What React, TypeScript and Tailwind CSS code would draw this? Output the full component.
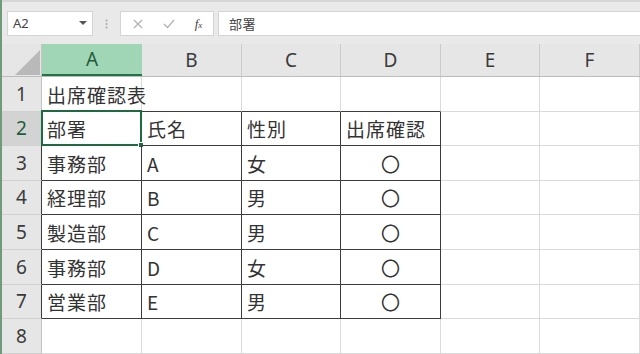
import React from "react";

const font = "font-['Noto_Sans_CJK_JP','Noto_Sans',sans-serif]";

const cols = ["A", "B", "C", "D", "E", "F"];
const rowHeights = ["h-[35px]", "h-[34px]", "h-[35px]", "h-[34px]", "h-[35px]", "h-[35px]", "h-[34px]", "h-[35px]"];

// row index 0..7 => excel row 1..8
const data: string[][] = [
  ["出席確認表", "", "", "", "", ""],
  ["部署", "氏名", "性別", "出席確認", "", ""],
  ["事務部", "A", "女", "〇", "", ""],
  ["経理部", "B", "男", "〇", "", ""],
  ["製造部", "C", "男", "〇", "", ""],
  ["事務部", "D", "女", "〇", "", ""],
  ["営業部", "E", "男", "〇", "", ""],
  ["", "", "", "", "", ""],
];

function Cell({ r, c, text }: { r: number; c: number; text: string }) {
  const inTable = r >= 1 && r <= 6 && c <= 3;
  const aboveTable = r === 0 && c <= 3;
  const right = inTable ? "border-r-[#3c3c3c]" : "border-r-[#dadada]";
  const bottom = inTable || aboveTable ? "border-b-[#3c3c3c]" : "border-b-[#dadada]";
  const center = c === 3 && r >= 2 && r <= 6;
  const selected = r === 1 && c === 0;
  return (
    <div
      className={`relative flex items-center border-r border-b ${right} ${bottom} ${
        center ? "justify-center" : "pl-[5px] tracking-[1px]"
      } text-[19px] leading-none text-[#333] whitespace-nowrap`}
    >
      {text}
      {selected && (
        <div className="absolute -top-[2px] -left-[1px] -right-[1px] -bottom-[1px] border-2 border-[#1e6b41]">
          <div className="absolute -right-[4px] -bottom-[4px] w-[6px] h-[6px] bg-[#1e6b41] border border-white" />
        </div>
      )}
    </div>
  );
}

export default function App() {
  return (
    <div className={`w-[640px] h-[354px] overflow-hidden bg-white border-l-2 border-[#6f9a7c] ${font}`}>
      {/* FORMULA BAR */}
      <div className="h-[44px] bg-[#e9e9e9] border-t-2 border-[#d6d6d6] pt-[9px] flex items-start">
        <div className="ml-[5px] w-[86px] h-[25px] bg-white border border-[#d4d4d4] flex items-center justify-between pl-[5px] pr-[5px]">
          <span className="text-[13px] text-[#444] font-['Noto_Sans',sans-serif]">A2</span>
          <svg width="8" height="5" viewBox="0 0 8 5">
            <path d="M0 0 L8 0 L4 4 Z" fill="#555" />
          </svg>
        </div>
        <div className="w-[27px] h-[25px] flex items-center justify-center">
          <svg width="3" height="10" viewBox="0 0 3 10">
            <circle cx="1.5" cy="1.5" r="1" fill="#a8a8a8" />
            <circle cx="1.5" cy="5" r="1" fill="#a8a8a8" />
            <circle cx="1.5" cy="8.5" r="1" fill="#a8a8a8" />
          </svg>
        </div>
        <div className="w-[94px] h-[25px] bg-white border border-[#d4d4d4] flex items-center">
          <div className="w-[33px] flex justify-center">
            <svg width="10" height="10" viewBox="0 0 10 10">
              <path d="M1 1 L9 9 M9 1 L1 9" stroke="#b4b4b4" strokeWidth="1.3" />
            </svg>
          </div>
          <div className="w-[30px] flex justify-center">
            <svg width="12" height="10" viewBox="0 0 12 10">
              <path d="M1 5 L4.5 8.5 L11 1" stroke="#b4b4b4" strokeWidth="1.4" fill="none" />
            </svg>
          </div>
          <div className="w-[29px] flex justify-center">
            <span className="text-[13px] italic text-[#444] font-['Liberation_Serif',serif] leading-none">
              f<span className="text-[9px]">x</span>
            </span>
          </div>
        </div>
        <div className="ml-[4px] flex-1 h-[25px] bg-white border border-[#d4d4d4] border-r-0 flex items-center pl-[10px]">
          <span className="text-[13px] text-[#444] leading-none tracking-[0.5px]">部署</span>
        </div>
      </div>

      {/* COLUMN HEADERS */}
      <div className="grid grid-cols-[40px_100px_100px_99px_100px_99px_100px] h-[33px] bg-[#e6e6e6] border-b border-[#bcbcbc]">
        <div className="relative border-r border-[#c4c4c4]">
          <svg className="absolute left-[13px] top-[6px]" width="25" height="25" viewBox="0 0 25 25">
            <path d="M0 25 L25 25 L25 0 Z" fill="#b9b9b9" />
          </svg>
        </div>
        {cols.map((c, i) =>
          i === 0 ? (
            <div
              key={c}
              className="flex items-center justify-center bg-[#a0d5b6] border-b-2 border-[#217346] text-[19px] text-[#1f5c3b] leading-none font-['Noto_Sans',sans-serif]"
            >
              {c}
            </div>
          ) : (
            <div
              key={c}
              className="flex items-center justify-center border-r border-[#cbcbcb] text-[19px] text-[#3a3a3a] leading-none font-['Noto_Sans',sans-serif]"
            >
              {c}
            </div>
          )
        )}
      </div>

      {/* ROWS */}
      {data.map((row, r) => (
        <div key={r} className={`grid grid-cols-[40px_100px_100px_99px_100px_99px_100px] ${rowHeights[r]}`}>
          <div
            className={`flex items-center justify-center border-b border-r ${
              r === 1 ? "bg-[#d3d3d3] text-[#1f5c3b]" : "bg-[#e6e6e6] text-[#3a3a3a]"
            } border-b-[#d0d0d0] ${r >= 1 && r <= 6 ? "border-r-[#3c3c3c]" : "border-r-[#c4c4c4]"} text-[19px] leading-none font-['Noto_Sans',sans-serif]`}
          >
            {r + 1}
          </div>
          {row.map((text, c) => (
            <Cell key={c} r={r} c={c} text={text} />
          ))}
        </div>
      ))}
    </div>
  );
}
